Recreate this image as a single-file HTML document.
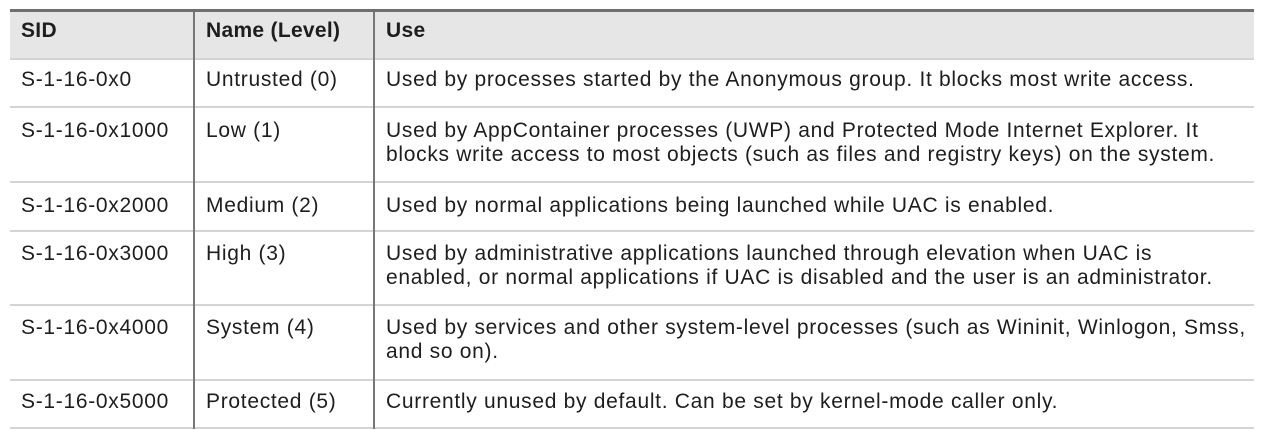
<!DOCTYPE html>
<html><head><meta charset="utf-8"><style>
html,body{margin:0;padding:0;background:#fff;}
body{width:1269px;height:439px;position:relative;overflow:hidden;font-family:"Liberation Sans",sans-serif;font-size:21px;letter-spacing:0.7px;color:#1e1e1e;}
.tb{position:absolute;left:10px;top:9px;width:1244px;height:3px;background:#6f6f6f;}
.hd{position:absolute;left:10px;top:12px;width:1244px;height:47px;background:#e6e6e6;}
.hl{position:absolute;left:10px;width:1244px;height:2px;background:#d4d4d4;}
.vl{position:absolute;top:12px;height:417px;width:2px;background:#777;}
.t{position:absolute;line-height:24px;white-space:nowrap;}
.b{font-weight:bold;letter-spacing:0.3px;}
</style></head><body>
<div class="tb"></div><div class="hd"></div>
<div class="hl" style="top:58px"></div>
<div class="hl" style="top:106px"></div>
<div class="hl" style="top:181px"></div>
<div class="hl" style="top:230px"></div>
<div class="hl" style="top:304px"></div>
<div class="hl" style="top:379px"></div>
<div class="hl" style="top:427px"></div>
<div class="vl" style="left:193px"></div>
<div class="vl" style="left:373px"></div>

<div class="t b" style="left:21px;top:19px">SID</div>
<div class="t b" style="left:206px;top:19px">Name (Level)</div>
<div class="t b" style="left:386px;top:19px">Use</div>

<div class="t" style="left:21px;top:68px">S-1-16-0x0</div>
<div class="t" style="left:206px;top:68px">Untrusted (0)</div>
<div class="t" style="left:386px;top:68px">Used by processes started by the Anonymous group. It blocks most write access.</div>

<div class="t" style="left:21px;top:119px">S-1-16-0x1000</div>
<div class="t" style="left:206px;top:119px">Low (1)</div>
<div class="t" style="left:386px;top:119px">Used by AppContainer processes (UWP) and Protected Mode Internet Explorer. It<br>blocks write access to most objects (such as files and registry keys) on the system.</div>

<div class="t" style="left:21px;top:194px">S-1-16-0x2000</div>
<div class="t" style="left:206px;top:194px">Medium (2)</div>
<div class="t" style="left:386px;top:194px">Used by normal applications being launched while UAC is enabled.</div>

<div class="t" style="left:21px;top:242px">S-1-16-0x3000</div>
<div class="t" style="left:206px;top:242px">High (3)</div>
<div class="t" style="left:386px;top:242px">Used by administrative applications launched through elevation when UAC is<br>enabled, or normal applications if UAC is disabled and the user is an administrator.</div>

<div class="t" style="left:21px;top:316px">S-1-16-0x4000</div>
<div class="t" style="left:206px;top:316px">System (4)</div>
<div class="t" style="left:386px;top:316px">Used by services and other system-level processes (such as Wininit, Winlogon, Smss,<br>and so on).</div>

<div class="t" style="left:21px;top:390px">S-1-16-0x5000</div>
<div class="t" style="left:206px;top:390px">Protected (5)</div>
<div class="t" style="left:386px;top:390px">Currently unused by default. Can be set by kernel-mode caller only.</div>
</body></html>
